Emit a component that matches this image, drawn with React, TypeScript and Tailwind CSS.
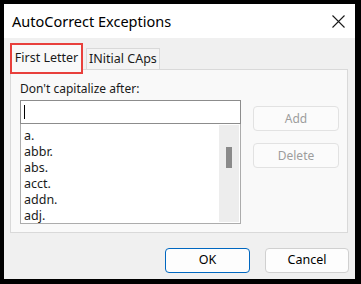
const ITEMS = ['a.', 'abbr.', 'abs.', 'acct.', 'addn.', 'adj.'];

export default function App() {
  return (
    <div className="w-[361px] h-[284px] bg-black pt-[4px] pl-[4px] font-['Noto_Sans',sans-serif] text-[12px] text-[#1a1a1a]">
      <div className="w-[351px] h-[275px] bg-[#f0f0f0] flex flex-col">
        {/* Title bar */}
        <div className="h-[34px] bg-white flex items-center justify-between pl-[8px] pr-[10px] shrink-0">
          <span className="text-[14.5px] text-black leading-none mt-[1px]">AutoCorrect Exceptions</span>
          <svg className="w-[13px] h-[13px]" viewBox="0 0 13 13" fill="none" stroke="#1a1a1a" strokeWidth={1.1}>
            <path d="M0.5 0.5l12 12M12.5 0.5l-12 12" />
          </svg>
        </div>

        {/* Tabs */}
        <div className="flex items-end pl-[6px] mt-[5px] h-[31px] -mb-[5px] relative z-10">
          <div className="w-[73px] h-[31px] border-2 border-[#e8403c] bg-[#f9f9f9] flex items-start pt-[4px] justify-center text-[12.5px]">
            First Letter
          </div>
          <div className="ml-[3px] mb-[5px] w-[74px] h-[21px] border border-b-0 border-[#d9d9d9] bg-[#f4f4f4] flex items-center justify-center text-[12.5px]">
            INitial CAps
          </div>
        </div>

        {/* Panel */}
        <div className="ml-[6px] mr-[7px] h-[164px] border border-[#d9d9d9] bg-[#f9f9f9] flex pl-[9px] pt-[11px]">
          <div className="w-[221px] flex flex-col">
            <div className="leading-[16px] text-[12px]">Don't capitalize after:</div>
            <div className="mt-[3px] h-[24px] border border-[#8c8c8c] bg-white flex items-center pl-[3px]">
              <div className="w-px h-[14px] bg-black" />
            </div>
            <div className="h-[100px] border border-t-0 border-[#acacac] bg-white flex">
              <div className="flex-1 pl-[3px] pt-[4px]">
                {ITEMS.map(i => (
                  <div key={i} className="leading-[16px] text-[12.5px]">{i}</div>
                ))}
              </div>
              <div className="w-[20px] bg-[#ededed] my-[1px] mr-[1px] flex justify-center pt-[22px]">
                <div className="w-[6px] h-[21px] bg-[#8a8a8a]" />
              </div>
            </div>
          </div>
          <div className="ml-[12px] pt-[25px] flex flex-col gap-[12px]">
            <button className="w-[86px] h-[25px] rounded-[4px] border border-[#e2e2e2] bg-[#fbfbfb] text-[#9d9d9d] text-[12px]">Add</button>
            <button className="w-[86px] h-[25px] rounded-[4px] border border-[#e2e2e2] bg-[#fbfbfb] text-[#9d9d9d] text-[12px]">Delete</button>
          </div>
        </div>

        {/* Bottom buttons */}
        <div className="flex justify-end gap-[15px] pr-[6px] mt-[15px]">
          <button className="w-[85px] h-[25px] rounded-[4px] border border-[#0067c0] bg-[#fdfdfd] text-[12.5px] text-black">OK</button>
          <button className="w-[84px] h-[25px] rounded-[4px] border border-[#d0d0d0] bg-[#fdfdfd] text-[12.5px] text-black">Cancel</button>
        </div>
      </div>
    </div>
  );
}
